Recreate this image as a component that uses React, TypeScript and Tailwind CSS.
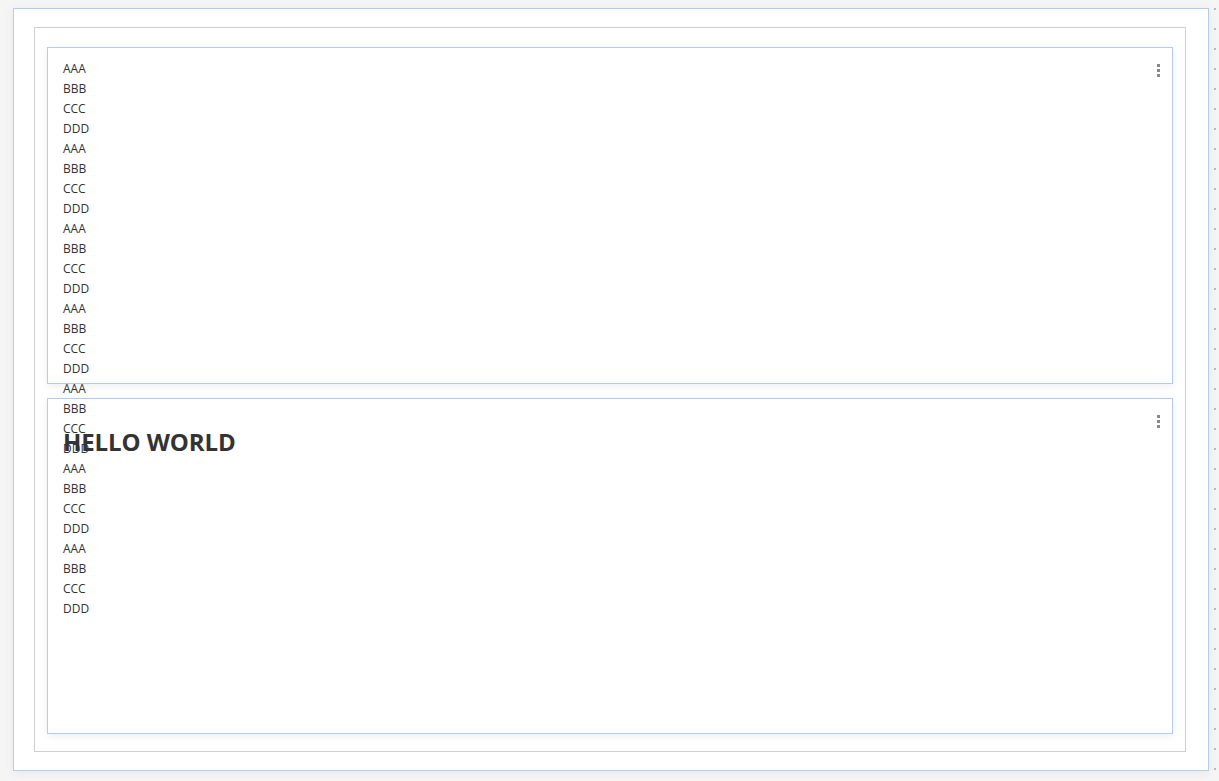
import React from 'react';

const rows = Array.from({ length: 7 }).flatMap(() => ['AAA', 'BBB', 'CCC', 'DDD']);

function MenuDots() {
  return (
    <div className="flex flex-col gap-[2px] mt-[16px] mr-[12px] shrink-0">
      <span className="block w-[3px] h-[3px] bg-[#888]" />
      <span className="block w-[3px] h-[3px] bg-[#888]" />
      <span className="block w-[3px] h-[3px] bg-[#888]" />
    </div>
  );
}

export default function App() {
  return (
    <div
      className="w-[1219px] h-[781px] overflow-hidden bg-[#f5f5f5] bg-[image:radial-gradient(circle,#bbb_1px,transparent_1.2px)] bg-[size:20px_20px] bg-[position:5px_-1px] pt-[8px] pl-[13px]"
      style={{ fontFamily: '"Open Sans", "Liberation Sans", sans-serif' }}
    >
      {/* outer canvas frame */}
      <div className="w-[1196px] h-[763px] bg-white border border-[#b3cdf0] shadow-[0_2px_10px_rgba(0,0,0,0.06)] pt-[18px] pl-[20px] pr-[22px] pb-[18px]">
        {/* grouping box */}
        <div className="w-full h-full border border-[#cfcfcf] pt-[19px] px-[12px] pb-[17px] flex flex-col gap-[14px]">
          {/* panel 1 */}
          <div className="h-[337px] shrink-0 border border-[#b3cdf0] bg-white shadow-[0_2px_8px_rgba(0,0,0,0.07)] flex">
            <div className="flex-1 pt-[11px] pl-[15px] text-[12px] leading-[20px] text-[#333]">
              {rows.map((r, i) => (
                <div key={i}>{r}</div>
              ))}
            </div>
            <MenuDots />
          </div>
          {/* panel 2 */}
          <div className="h-[336px] shrink-0 border border-[#b3cdf0] shadow-[0_2px_8px_rgba(0,0,0,0.07)] flex">
            <div className="flex-1 pt-[26px] pl-[15px]">
              <h2 className="text-[24px] leading-[33px] font-bold tracking-[-0.1px] text-[#333]">HELLO WORLD</h2>
            </div>
            <MenuDots />
          </div>
        </div>
      </div>
    </div>
  );
}
